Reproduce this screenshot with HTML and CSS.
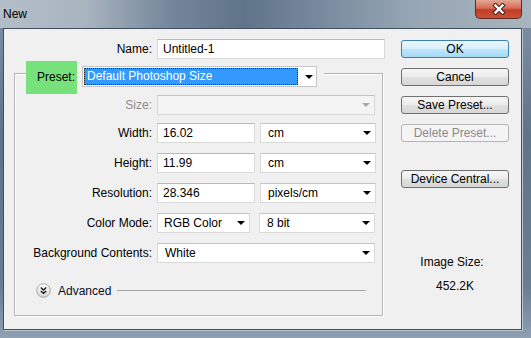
FILE: index.html
```html
<!DOCTYPE html>
<html lang="en">
<head>
    <meta charset="UTF-8">
    <meta name="viewport" content="width=device-width, initial-scale=1.0">
    <title>New</title>
    <link rel="stylesheet" href="styles.css">
</head>
<body>
    <div class="window">
        <div class="titlebar">
            <span class="title">New</span>
            <div class="close-btn">
                <svg width="14" height="12" viewBox="0 0 14 12">
                    <path d="M3.5 2.5 L10.5 9.5 M10.5 2.5 L3.5 9.5" stroke="#4a2118" stroke-width="4.4" stroke-linecap="square" fill="none"/>
                    <path d="M3.5 2.5 L10.5 9.5 M10.5 2.5 L3.5 9.5" stroke="#ffffff" stroke-width="2.4" stroke-linecap="square" fill="none"/>
                </svg>
            </div>
        </div>

        <div class="client">
            <div class="main">
                <div class="row name-row">
                    <label class="label name-label" for="name">Name:</label>
                    <input id="name" class="text-field name-field" value="Untitled-1">
                </div>

                <div class="group">
                    <div class="preset-row">
                        <label class="preset-label">Preset:</label>
                        <div class="select preset-select">
                            <span class="highlight">Default Photoshop Size</span>
                            <span class="arrow"></span>
                        </div>
                    </div>

                    <div class="fields">
                        <div class="row size-row">
                            <label class="label disabled-text">Size:</label>
                            <div class="select wide disabled"><span></span><span class="arrow"></span></div>
                        </div>
                        <div class="row">
                            <label class="label">Width:</label>
                            <input class="text-field short" value="16.02">
                            <div class="select unit"><span>cm</span><span class="arrow"></span></div>
                        </div>
                        <div class="row">
                            <label class="label">Height:</label>
                            <input class="text-field short" value="11.99">
                            <div class="select unit"><span>cm</span><span class="arrow"></span></div>
                        </div>
                        <div class="row">
                            <label class="label">Resolution:</label>
                            <input class="text-field short" value="28.346">
                            <div class="select unit"><span>pixels/cm</span><span class="arrow"></span></div>
                        </div>
                        <div class="row">
                            <label class="label">Color Mode:</label>
                            <div class="select mode"><span>RGB Color</span><span class="arrow"></span></div>
                            <div class="select unit bits"><span>8 bit</span><span class="arrow"></span></div>
                        </div>
                        <div class="row">
                            <label class="label">Background Contents:</label>
                            <div class="select wide"><span>White</span><span class="arrow"></span></div>
                        </div>
                    </div>

                    <div class="advanced">
                        <svg class="adv-icon" width="15" height="15" viewBox="0 0 15 15">
                            <defs>
                                <linearGradient id="advGrad" x1="0" y1="0" x2="0" y2="1">
                                    <stop offset="0" stop-color="#ffffff"/>
                                    <stop offset="1" stop-color="#d6d6d6"/>
                                </linearGradient>
                            </defs>
                            <circle cx="7.5" cy="7.5" r="6.8" fill="url(#advGrad)" stroke="#a4a4a4"/>
                            <path d="M4.8 4.6 L7.5 7 L10.2 4.6 M4.8 7.9 L7.5 10.3 L10.2 7.9" stroke="#1a1a1a" stroke-width="1.4" fill="none"/>
                        </svg>
                        <span class="adv-text">Advanced</span>
                        <div class="adv-line"></div>
                    </div>
                </div>
            </div>

            <div class="side">
                <button class="btn default">OK</button>
                <button class="btn">Cancel</button>
                <button class="btn">Save Preset...</button>
                <button class="btn" disabled>Delete Preset...</button>
                <button class="btn device">Device Central...</button>
                <div class="image-size">
                    <div class="size-title">Image Size:</div>
                    <div class="size-value">452.2K</div>
                </div>
            </div>
        </div>
    </div>
</body>
</html>
```

FILE: styles.css
```css
* {
    margin: 0;
    padding: 0;
    box-sizing: border-box;
    font-family: 'Liberation Sans', Arial, sans-serif;
}

body {
    width: 531px;
    height: 338px;
    overflow: hidden;
    background-color: #5d6f82;
}

.window {
    width: 531px;
    height: 338px;
    background: linear-gradient(#8193a6 0%, #5f7389 40%, #6a7e93 85%, #8ea0b2 100%);
    display: flex;
    flex-direction: column;
}

/* title bar */
.titlebar {
    height: 28px;
    display: flex;
    align-items: flex-start;
    background: linear-gradient(90deg, #b4bec8 0%, #a9b4bf 16%, #74879a 32%, #607489 46%, #778a9d 60%, #97a6b4 78%, #a8b4bf 100%);
}

.title {
    font-size: 12px;
    color: #000;
    padding-left: 3px;
    line-height: 28px;
}

.close-btn {
    margin-left: auto;
    margin-right: 9px;
    width: 47px;
    height: 19px;
    border: 1px solid #5b2a22;
    border-top: none;
    border-radius: 0 0 5px 5px;
    background: linear-gradient(#e4a797 0%, #d66d57 45%, #c23c24 55%, #cd5236 100%);
    display: flex;
    justify-content: center;
    align-items: center;
}

/* client area */
.client {
    margin-left: 3px;
    width: 519px;
    height: 302px;
    background-color: #f0f0f0;
    border: 1px solid #3f4f60;
    box-shadow: 1px 1px 0 #b9c6d4;
    display: flex;
}

.main {
    width: 381px;
    padding: 10px 0 0 10px;
}

.row {
    display: flex;
    align-items: center;
    height: 20px;
}

.label {
    width: 137px;
    text-align: right;
    font-size: 12px;
    color: #000;
    margin-right: 5px;
}

.name-label {
    width: 138px;
}

.disabled-text {
    color: #8d8d8d;
}

.text-field {
    height: 20px;
    border: 1px solid #d9d9d9;
    border-top-color: #b9b9b9;
    background-color: #fff;
    font-size: 12px;
    color: #000;
    padding: 0 5px;
    outline: none;
}

.name-field {
    width: 228px;
}

.short {
    width: 98px;
    margin-right: 5px;
}

/* group box */
.group {
    margin-top: 14px;
    width: 369px;
    border: 1px solid #b4b4b4;
    box-shadow: inset 1px 1px 0 #fff, 1px 1px 0 #fff;
    padding-bottom: 17px;
}

.preset-row {
    display: flex;
    align-items: flex-start;
    width: fit-content;
    margin: -13px 0 0 11px;
    padding-right: 7px;
    background-color: #f0f0f0;
}

.preset-label {
    width: 51px;
    height: 33px;
    line-height: 33px;
    background-color: #77e27b;
    text-align: right;
    padding-right: 2px;
    font-size: 12px;
    color: #000;
}

.select {
    height: 20px;
    border: 1px solid #d9d9d9;
    border-top-color: #c4c4c4;
    background-color: #fff;
    display: flex;
    align-items: center;
    justify-content: space-between;
    padding: 0 4px 0 7px;
    font-size: 12px;
    color: #000;
}

.preset-select {
    width: 235px;
    height: 21px;
    margin: 5px 0 0 5px;
    padding: 1px 3px 1px 1px;
    border-color: #c6c6c6;
}

.highlight {
    width: 214px;
    height: 17px;
    line-height: 15px;
    background-color: #3399ff;
    border: 1px dotted #2a2a2a;
    color: #fff;
    padding-left: 2px;
}

.arrow {
    width: 0;
    height: 0;
    border-left: 4px solid transparent;
    border-right: 4px solid transparent;
    border-top: 4px solid #000;
}

.disabled {
    background-color: #f4f4f4;
}

.disabled .arrow {
    border-top-color: #a8a8a8;
}

.wide {
    width: 218px;
}

.unit {
    width: 116px;
}

.mode {
    width: 93px;
    margin-right: 9px;
    padding-left: 6px;
}

.fields {
    display: flex;
    flex-direction: column;
    gap: 10px;
    margin-top: 1px;
}

.size-row {
    margin-bottom: -2px;
}

/* advanced */
.advanced {
    display: flex;
    align-items: center;
    margin: 20px 16px 0 21px;
    height: 15px;
}

.adv-text {
    font-size: 12px;
    color: #0d0d24;
    margin-left: 7px;
}

.adv-line {
    flex: 1;
    height: 1px;
    background-color: #a6a6a6;
    margin-left: 6px;
}

/* buttons column */
.side {
    margin-left: 16px;
    width: 108px;
    padding-top: 11px;
    display: flex;
    flex-direction: column;
    gap: 10px;
}

.btn {
    width: 108px;
    height: 18px;
    border: 1px solid #707070;
    border-radius: 3px;
    background: linear-gradient(#f6f6f6 0%, #ececec 48%, #e0e0e0 52%, #d6d6d6 100%);
    font-size: 12px;
    color: #000;
    cursor: pointer;
}

.btn.default {
    border-color: #3c7fb1;
    background: linear-gradient(#eaf6fd 0%, #d9f0fc 48%, #bee6fd 52%, #a7d9f5 100%);
}

.btn:disabled {
    border-color: #b2b6b9;
    background: #f4f4f4;
    color: #8a8a8a;
}

.device {
    margin-top: 18px;
}

.image-size {
    margin-top: 57px;
    text-align: center;
    font-size: 12px;
    color: #000;
    line-height: 15px;
}

.size-title {
    padding-right: 6px;
}

.size-value {
    margin-top: 9px;
}
```
